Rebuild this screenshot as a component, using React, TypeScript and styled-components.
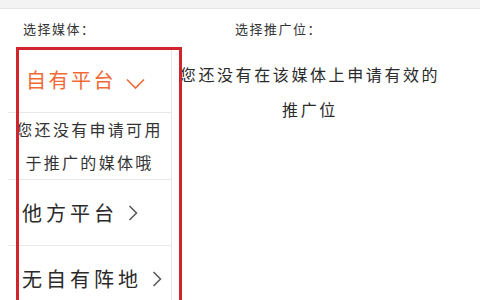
import React from "react";
import styled, { createGlobalStyle } from "styled-components";

const Global = createGlobalStyle`
  html, body { margin: 0; padding: 0; background: #ffffff; }
  body {
    font-family: "Noto Sans CJK SC", "Noto Sans", sans-serif;
    color: #333333;
    width: 480px;
    height: 300px;
    overflow: hidden;
  }
`;

const Page = styled.div`
  position: relative;
  width: 480px;
  height: 300px;
  overflow: hidden;
  background: #ffffff;
`;

const TopBar = styled.div`
  height: 8px;
  background: #f3f3f3;
  border-bottom: 1px solid #e4e4e4;
`;

const Body = styled.div`
  display: flex;
`;

const MediaColumn = styled.div`
  width: 164px;
  margin-left: 8px;
  display: flex;
  flex-direction: column;
`;

const PromoColumn = styled.div`
  flex: 1;
  display: flex;
  flex-direction: column;
  padding-right: 32px;
`;

const Label = styled.div<{ $indent: number }>`
  height: 38px;
  display: flex;
  align-items: center;
  padding-left: ${(p) => p.$indent}px;
  font-size: 13px;
  letter-spacing: 1.5px;
  color: #333333;
`;

const Menu = styled.div`
  border-right: 1px solid #e6e6e6;
  display: flex;
  flex-direction: column;
`;

const Item = styled.div<{ $active?: boolean }>`
  height: 65px;
  display: flex;
  align-items: center;
  gap: 10px;
  padding-left: ${(p) => (p.$active ? 18 : 14)}px;
  border-bottom: 1px solid #e9e9e9;
  font-size: 20px;
  letter-spacing: ${(p) => (p.$active ? 2.5 : 4)}px;
  color: ${(p) => (p.$active ? "#ef6a36" : "#2a2a2a")};
  white-space: nowrap;
`;

const SubNote = styled.div`
  height: 66px;
  border-bottom: 1px solid #e9e9e9;
  display: flex;
  flex-direction: column;
  align-items: center;
  justify-content: center;
  font-size: 16px;
  line-height: 33px;
  letter-spacing: 2.3px;
  color: #333333;
  white-space: nowrap;
`;

const Message = styled.div`
  margin-top: 10px;
  text-align: center;
  font-size: 16px;
  line-height: 35px;
  letter-spacing: 2.6px;
  color: #2a2a2a;
  white-space: nowrap;
`;

const Highlight = styled.div`
  position: absolute;
  left: 16px;
  top: 47px;
  width: 160px;
  height: 270px;
  border: 3px solid #d1242c;
  pointer-events: none;
`;

const ChevronDown = () => (
  <svg width="19" height="12" viewBox="0 0 19 12" style={{ marginTop: 8 }}>
    <path d="M1 1.5 L9.5 10 L18 1.5" fill="none" stroke="#ef6a36" strokeWidth="1.6" />
  </svg>
);

const ChevronRight = () => (
  <svg width="10" height="16" viewBox="0 0 10 16">
    <path d="M1.5 1 L8.5 8 L1.5 15" fill="none" stroke="#555555" strokeWidth="1.5" />
  </svg>
);

export default function App() {
  return (
    <Page>
      <Global />
      <TopBar />
      <Body>
        <MediaColumn>
          <Label $indent={15}>选择媒体：</Label>
          <Menu>
            <Item $active>
              <span>自有平台</span>
              <ChevronDown />
            </Item>
            <SubNote>
              <span>您还没有申请可用</span>
              <span>于推广的媒体哦</span>
            </SubNote>
            <Item>
              <span>他方平台</span>
              <ChevronRight />
            </Item>
            <Item>
              <span>无自有阵地</span>
              <ChevronRight />
            </Item>
          </Menu>
        </MediaColumn>
        <PromoColumn>
          <Label $indent={63}>选择推广位：</Label>
          <Message>
            您还没有在该媒体上申请有效的
            <br />
            推广位
          </Message>
        </PromoColumn>
      </Body>
      <Highlight />
    </Page>
  );
}
